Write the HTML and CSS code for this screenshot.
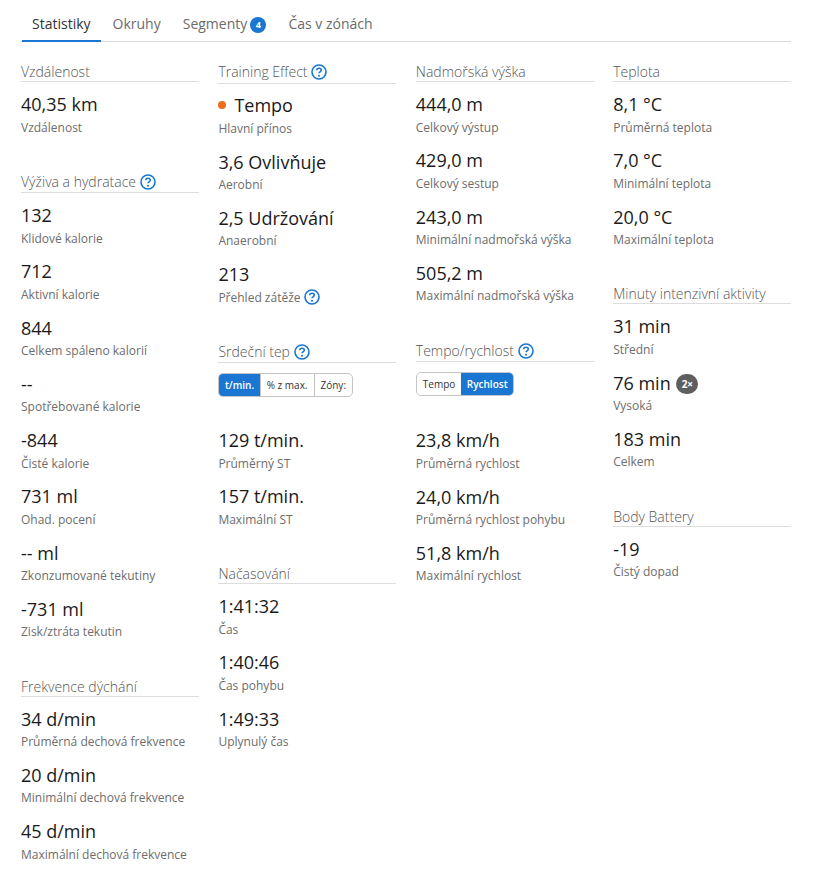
FILE: index.html
```html
<!DOCTYPE html>
<html lang="cs">
<head>
<meta charset="utf-8">
<title>Statistiky</title>
<link rel="stylesheet" href="styles.css">
</head>
<body>
<svg class="defs" width="0" height="0" aria-hidden="true"><symbol id="help" viewBox="0 0 16 16"><circle cx="8" cy="8" r="7" fill="none" stroke="currentColor" stroke-width="1.6"/><path d="M5.7 6.3c0-1.3 1.1-2.1 2.3-2.1s2.3.7 2.3 1.9c0 1.7-2.3 1.7-2.3 3.2" fill="none" stroke="currentColor" stroke-width="1.6"/><circle cx="8" cy="11.7" r="1" fill="currentColor"/></symbol></svg>
<nav class="tabs">
  <a class="tab active">Statistiky</a>
  <a class="tab">Okruhy</a>
  <a class="tab">Segmenty <span class="count">4</span></a>
  <a class="tab">Čas v zónách</a>
</nav>
<main class="grid">
  <div class="col">
    <section class="sec">
      <h3>Vzdálenost</h3>
      <div class="item"><div class="val">40,35 km</div><div class="lab">Vzdálenost</div></div>
    </section>
    <section class="sec">
      <h3 class="has-q">Výživa a hydratace <svg class="q"><use href="#help"/></svg></h3>
      <div class="item"><div class="val">132</div><div class="lab">Klidové kalorie</div></div>
      <div class="item"><div class="val">712</div><div class="lab">Aktivní kalorie</div></div>
      <div class="item"><div class="val">844</div><div class="lab">Celkem spáleno kalorií</div></div>
      <div class="item"><div class="val">--</div><div class="lab">Spotřebované kalorie</div></div>
      <div class="item"><div class="val">-844</div><div class="lab">Čisté kalorie</div></div>
      <div class="item"><div class="val">731 ml</div><div class="lab">Ohad. pocení</div></div>
      <div class="item"><div class="val">-- ml</div><div class="lab">Zkonzumované tekutiny</div></div>
      <div class="item"><div class="val">-731 ml</div><div class="lab">Zisk/ztráta tekutin</div></div>
    </section>
    <section class="sec">
      <h3>Frekvence dýchání</h3>
      <div class="item"><div class="val">34 d/min</div><div class="lab">Průměrná dechová frekvence</div></div>
      <div class="item"><div class="val">20 d/min</div><div class="lab">Minimální dechová frekvence</div></div>
      <div class="item"><div class="val">45 d/min</div><div class="lab">Maximální dechová frekvence</div></div>
    </section>
  </div>
  <div class="col">
    <section class="sec">
      <h3 class="has-q">Training Effect <svg class="q"><use href="#help"/></svg></h3>
      <div class="item"><div class="val"><span class="dot"></span>Tempo</div><div class="lab">Hlavní přínos</div></div>
      <div class="item"><div class="val">3,6 Ovlivňuje</div><div class="lab">Aerobní</div></div>
      <div class="item"><div class="val">2,5 Udržování</div><div class="lab">Anaerobní</div></div>
      <div class="item"><div class="val">213</div><div class="lab">Přehled zátěže <svg class="q"><use href="#help"/></svg></div></div>
    </section>
    <section class="sec">
      <h3 class="has-q">Srdeční tep <svg class="q"><use href="#help"/></svg></h3>
      <div class="toggle"><span class="opt on">t/min.</span><span class="opt">% z max.</span><span class="opt">Zóny:</span></div>
      <div class="item"><div class="val">129 t/min.</div><div class="lab">Průměrný ST</div></div>
      <div class="item"><div class="val">157 t/min.</div><div class="lab">Maximální ST</div></div>
    </section>
    <section class="sec">
      <h3>Načasování</h3>
      <div class="item"><div class="val">1:41:32</div><div class="lab">Čas</div></div>
      <div class="item"><div class="val">1:40:46</div><div class="lab">Čas pohybu</div></div>
      <div class="item"><div class="val">1:49:33</div><div class="lab">Uplynulý čas</div></div>
    </section>
  </div>
  <div class="col">
    <section class="sec">
      <h3>Nadmořská výška</h3>
      <div class="item"><div class="val">444,0 m</div><div class="lab">Celkový výstup</div></div>
      <div class="item"><div class="val">429,0 m</div><div class="lab">Celkový sestup</div></div>
      <div class="item"><div class="val">243,0 m</div><div class="lab">Minimální nadmořská výška</div></div>
      <div class="item"><div class="val">505,2 m</div><div class="lab">Maximální nadmořská výška</div></div>
    </section>
    <section class="sec sec-shift">
      <h3 class="has-q">Tempo/rychlost <svg class="q"><use href="#help"/></svg></h3>
      <div class="toggle"><span class="opt">Tempo</span><span class="opt on">Rychlost</span></div>
      <div class="item"><div class="val">23,8 km/h</div><div class="lab">Průměrná rychlost</div></div>
      <div class="item"><div class="val">24,0 km/h</div><div class="lab">Průměrná rychlost pohybu</div></div>
      <div class="item"><div class="val">51,8 km/h</div><div class="lab">Maximální rychlost</div></div>
    </section>
  </div>
  <div class="col">
    <section class="sec">
      <h3>Teplota</h3>
      <div class="item"><div class="val">8,1 °C</div><div class="lab">Průměrná teplota</div></div>
      <div class="item"><div class="val">7,0 °C</div><div class="lab">Minimální teplota</div></div>
      <div class="item"><div class="val">20,0 °C</div><div class="lab">Maximální teplota</div></div>
    </section>
    <section class="sec">
      <h3>Minuty intenzivní aktivity</h3>
      <div class="item"><div class="val">31 min</div><div class="lab">Střední</div></div>
      <div class="item"><div class="val">76 min <span class="mult">2×</span></div><div class="lab">Vysoká</div></div>
      <div class="item"><div class="val">183 min</div><div class="lab">Celkem</div></div>
    </section>
    <section class="sec">
      <h3>Body Battery</h3>
      <div class="item"><div class="val">-19</div><div class="lab">Čistý dopad</div></div>
    </section>
  </div>
</main>
</body>
</html>
```
FILE: styles.css
```css
* { box-sizing: border-box; }
html, body { margin: 0; background: #fff; }
body { padding: 0 24px 0 21px; font-family: "Open Sans", sans-serif; color: #1a1a1a; }
.defs { position: absolute; }
.tabs { display: flex; height: 42px; padding-left: 1px; border-bottom: 1px solid #d9d9d9; }
.tab { height: 42px; padding: 14px 10px 0; font-size: 14px; line-height: 20px; color: #6b6b6b; margin-right: 2px; white-space: nowrap; }
.tab.active { color: #333; border-bottom: 2px solid #1976d2; }
.count { display: inline-block; width: 16px; height: 16px; margin-left: -0.5px; border-radius: 50%; background: #1976d2; color: #fff; font-size: 9px; font-weight: 700; line-height: 16px; text-align: center; vertical-align: 1px; }
.grid { display: grid; grid-template-columns: repeat(4, 1fr); column-gap: 19.6px; padding-top: 20px; }
.sec { margin-bottom: 23.5px; }
.sec-shift { margin-top: 1.25px; }
h3 { margin: 0 0 10px; height: 20px; border-bottom: 1px solid #ddd; font-size: 14px; font-weight: 300; line-height: 20px; color: #555; white-space: nowrap; }
h3.has-q { height: 21.5px; margin-bottom: 9.75px; }
.item { height: 56.25px; }
.val { height: 26.5px; font-size: 18px; line-height: 25px; color: #1a1a1a; white-space: nowrap; }
.lab { font-size: 12px; line-height: 18px; color: #6d6d6d; white-space: nowrap; }
.q { display: inline-block; width: 16px; height: 16px; color: #1976d2; vertical-align: -3px; }
.dot { display: inline-block; width: 8px; height: 8px; margin-right: 8px; border-radius: 50%; background: #ee6c1c; vertical-align: 3px; }
.mult { display: inline-block; width: 22px; height: 20px; margin-left: 1px; border-radius: 10px; background: #5f5f5f; color: #fff; font-size: 10px; font-weight: 700; line-height: 20px; text-align: center; vertical-align: 2px; }
.toggle { display: inline-flex; height: 24px; margin: 0 0 31px; border: 1px solid #c4c4c4; border-radius: 5px; overflow: hidden; vertical-align: top; }
.sec-shift .toggle { margin-bottom: 32.5px; }
.opt { padding: 0 6px; font-size: 10px; font-weight: 500; line-height: 22px; color: #333; border-left: 1px solid #c4c4c4; white-space: nowrap; }
.opt:first-child { border-left: 0; }
.opt.on { background: #1976d2; color: #fff; border-left: 0; font-weight: 600; padding: 0 5.5px; }
```
